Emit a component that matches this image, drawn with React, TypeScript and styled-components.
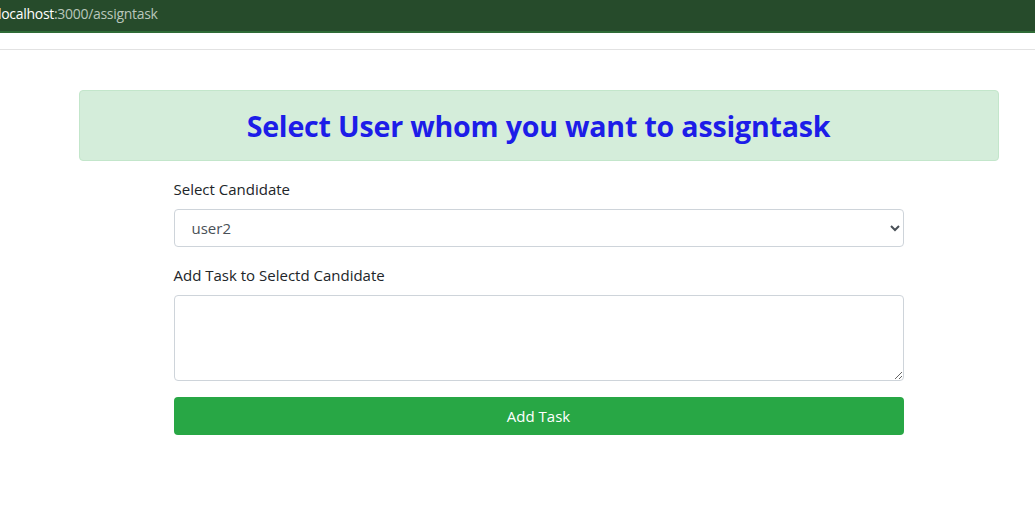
import React from "react";
import styled, { createGlobalStyle } from "styled-components";

const Global = createGlobalStyle`
  html, body { margin: 0; padding: 0; background: #fff; }
  body { font-family: "Open Sans", "Noto Sans", sans-serif; color: #212529; }
  * { box-sizing: border-box; }
`;

const TopBar = styled.div`
  height: 33px;
  background: #264b2b;
  border-bottom: 2px solid #2f6b36;
  display: flex;
  align-items: center;
  padding-bottom: 4px;
  font-family: "Open Sans", sans-serif;
  font-size: 14px;
  letter-spacing: -0.3px;
`;

const Host = styled.span`
  color: #ffffff;
  margin-left: -2px;
`;

const Path = styled.span`
  color: #b9c6bb;
`;

const NavBar = styled.div`
  height: 17px;
  border-bottom: 1px solid #e2e2e2;
`;

const Main = styled.main`
  padding: 40px 37px 0 79px;
  display: flex;
  flex-direction: column;
  align-items: center;
`;

const Alert = styled.div`
  width: 920px;
  height: 71px;
  background: #d4edda;
  border: 1px solid #c3e6cb;
  border-radius: 4px;
  display: flex;
  align-items: center;
  justify-content: center;
`;

const Title = styled.h1`
  margin: 0;
  color: #1d1de8;
  font-size: 28.6px;
  font-weight: 700;
  letter-spacing: -0.2px;
`;

const Form = styled.form`
  width: 730px;
  margin-top: 17px;
  display: flex;
  flex-direction: column;
`;

const Label = styled.label`
  font-size: 15px;
  line-height: 22px;
  margin-bottom: 9px;
`;

const Select = styled.select`
  height: 38px;
  border: 1px solid #ced4da;
  border-radius: 4px;
  padding: 0 12px 0 13px;
  font-family: inherit;
  font-size: 15px;
  color: #495057;
  background: #fff;
  margin-bottom: 17px;
`;

const TextArea = styled.textarea`
  height: 86px;
  border: 1px solid #ced4da;
  border-radius: 4px;
  font-family: inherit;
  margin-bottom: 16px;
`;

const Button = styled.button`
  height: 38px;
  border: none;
  border-radius: 4px;
  background: #28a745;
  color: #fff;
  font-family: inherit;
  font-size: 15px;
`;

export default function App() {
  return (
    <>
      <Global />
      <TopBar>
        <Host>localhost</Host>
        <Path>:3000/assigntask</Path>
      </TopBar>
      <NavBar />
      <Main>
        <Alert>
          <Title>Select User whom you want to assigntask</Title>
        </Alert>
        <Form onSubmit={(e) => e.preventDefault()}>
          <Label>Select Candidate</Label>
          <Select defaultValue="user2">
            <option value="user1">user1</option>
            <option value="user2">user2</option>
          </Select>
          <Label>Add Task to Selectd Candidate</Label>
          <TextArea />
          <Button type="submit">Add Task</Button>
        </Form>
      </Main>
    </>
  );
}
